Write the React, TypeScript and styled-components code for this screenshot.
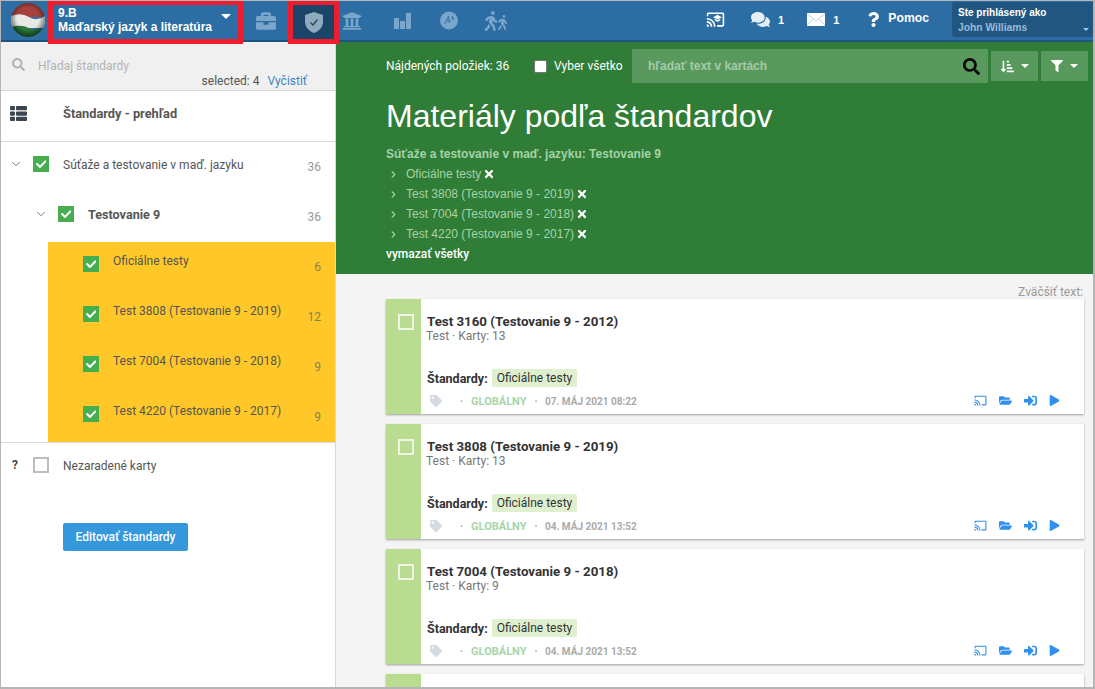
import React from "react";
import styled, { createGlobalStyle } from "styled-components";
import {
  FaBriefcase,
  FaUniversity,
  FaWalking,
  FaCheck,
  FaTimes,
  FaSearch,
  FaFilter,
  FaTag,
  FaFolderOpen,
  FaSignInAlt,
  FaPlay,
  FaComments,
  FaQuestion,
  FaThList,
  FaSortAmountDownAlt,
} from "react-icons/fa";
import { MdCastForEducation, MdCast } from "react-icons/md";
import { ChevronDown, ChevronRight } from "lucide-react";

const Global = createGlobalStyle`
  html, body {
    margin: 0;
    padding: 0;
    background: #f4f4f4;
    font-family: "Liberation Sans", Arial, sans-serif;
  }
  * { box-sizing: border-box; }
`;

const Page = styled.div`
  width: 1095px;
  height: 689px;
  overflow: hidden;
  border: 1px solid #b5b5b5;
  border-right-width: 2px;
  border-bottom-width: 2px;
  display: flex;
  flex-direction: column;
`;

const TopBar = styled.header`
  height: 41px;
  flex: none;
  display: flex;
  align-items: stretch;
  background: #2c6ea4;
  border-bottom: 2px solid #1d5480;
  position: relative;
`;
const FlagWrap = styled.div`
  width: 47px;
  padding: 2px 0 0 10px;
  flex: none;
`;
const ClassPicker = styled.div`
  width: 195px;
  flex: none;
  margin-top: -1px;
  height: 44px;
  z-index: 2;
  border: 5px solid #ed1c2e;
  background: #2c6ea4;
  color: #fff;
  font-weight: 700;
  font-size: 12px;
  line-height: 14px;
  padding: 1px 0 0 5px;
  position: relative;
`;
const Caret = styled.span<{ $size?: number; $color?: string }>`
  display: inline-block;
  width: 0;
  height: 0;
  border-left: ${(p) => p.$size || 4}px solid transparent;
  border-right: ${(p) => p.$size || 4}px solid transparent;
  border-top: ${(p) => p.$size || 4}px solid ${(p) => p.$color || "#fff"};
`;
const PickerCaret = styled.span`
  position: absolute;
  right: 7px;
  top: 9px;
  display: flex;
`;
const NavIcons = styled.nav`
  display: flex;
  align-items: stretch;
`;
const NavIcon = styled.div<{ $w: number; $active?: boolean }>`
  width: ${(p) => p.$w}px;
  flex: none;
  display: flex;
  align-items: center;
  justify-content: center;
  color: #7aa6cb;
  font-size: 20px;
  ${(p) =>
    p.$active &&
    `
    height: 44px;
    margin-top: -1px;
    z-index: 2;
    background: #1b4566;
    border: 5px solid #ed1c2e;
    color: #8fa9bd;
  `}
  svg + svg {
    margin-left: -6px;
    margin-top: 3px;
  }
`;
const TopRight = styled.div`
  margin-left: auto;
  display: flex;
  align-items: center;
  color: #fff;
  padding-bottom: 2px;
`;
const TopItem = styled.div<{ $ml: number }>`
  margin-left: ${(p) => p.$ml}px;
  display: flex;
  align-items: center;
  gap: 8px;
  font-size: 11px;
  font-weight: 700;
`;
const HelpLabel = styled.span`
  font-size: 12.2px;
  margin-left: -1px;
  margin-top: -3px;
`;
const UserBox = styled.div`
  width: 141px;
  height: 35px;
  margin: 1px 0 0 23px;
  align-self: flex-start;
  background: #215681;
  border-radius: 3px 0 0 3px;
  padding: 4px 0 0 6px;
  font-size: 10px;
  line-height: 14px;
  font-weight: 700;
  position: relative;
`;
const UserName = styled.div`
  color: #98bad9;
  font-size: 10.3px;
  margin-top: 1px;
`;
const UserCaret = styled.span`
  position: absolute;
  right: 4px;
  bottom: 6px;
  display: flex;
`;

const Body = styled.div`
  flex: 1;
  display: flex;
  min-height: 0;
`;
const Side = styled.aside`
  width: 335px;
  flex: none;
  background: #fff;
  border-right: 1px solid #d8d8d8;
  color: #555;
  font-family: Roboto, "Liberation Sans", sans-serif;
`;
const SideSearch = styled.div`
  height: 49px;
  background: #f0f0f0;
  border-bottom: 1px solid #d8d8d8;
  position: relative;
  padding: 16px 0 0 11px;
  display: flex;
  gap: 13px;
  color: #b3b3b3;
  font-size: 12px;
`;
const Placeholder = styled.span`
  line-height: 17px;
`;
const Selected = styled.div`
  position: absolute;
  right: 28px;
  top: 32px;
  font-size: 12px;
  color: #555;
  display: flex;
  gap: 8px;
`;
const ClearLink = styled.span`
  color: #3f85bd;
`;
const Overview = styled.div`
  height: 51px;
  display: flex;
  align-items: center;
  padding: 0 0 5px 9px;
  font-size: 12.8px;
  font-weight: 700;
  color: #555;
  border-bottom: 1px solid #d8d8d8;
`;
const OverviewIcon = styled.span`
  width: 53px;
  display: flex;
  color: #3c4650;
  font-size: 17px;
`;
const Row = styled.div<{ $indent: number; $hl?: boolean; $bold?: boolean }>`
  height: 50px;
  display: flex;
  align-items: flex-start;
  padding-top: ${(p) => (p.$hl ? 11 : 14)}px;
  margin-left: ${(p) => (p.$hl ? 47 : 0)}px;
  padding-left: ${(p) => (p.$hl ? p.$indent - 47 : p.$indent)}px;
  background: ${(p) => (p.$hl ? "#ffc727" : "transparent")};
  font-size: ${(p) => (p.$bold ? 12.6 : 12)}px;
  font-weight: ${(p) => (p.$bold ? 700 : 400)};
`;
const Toggle = styled.span`
  width: 22px;
  height: 16px;
  flex: none;
  display: flex;
  align-items: center;
  margin-left: -2px;
  margin-right: 2px;
  color: #666;
`;
const Box = styled.span<{ $checked?: boolean; $mt?: number }>`
  width: 16px;
  height: 16px;
  flex: none;
  margin-top: ${(p) => p.$mt || 0}px;
  display: flex;
  align-items: center;
  justify-content: center;
  color: #fff;
  font-size: 10.5px;
  background: ${(p) => (p.$checked ? "#46ae4f" : "#fff")};
  border: ${(p) => (p.$checked ? "none" : "2px solid #bdbdbd")};
`;
const RowLabel = styled.span<{ $mt?: number }>`
  margin: ${(p) => p.$mt ?? 2}px 0 0 14px;
  flex: 1;
  line-height: 15px;
`;
const Count = styled.span<{ $hl?: boolean }>`
  width: 40px;
  padding-right: 14px;
  text-align: right;
  color: ${(p) => (p.$hl ? "#8a7f5c" : "#999")};
  font-size: 12px;
  font-weight: 400;
  margin-top: ${(p) => (p.$hl ? 7 : 4)}px;
  line-height: 15px;
`;
const Unsorted = styled.div`
  border-top: 1px solid #d8d8d8;
  height: 50px;
  padding: 14px 0 0 11px;
  display: flex;
  font-size: 12px;
`;
const UnsortedMark = styled.span`
  width: 21px;
  flex: none;
  font-weight: 700;
  color: #444;
  line-height: 16px;
`;
const EditButton = styled.button`
  display: block;
  margin: 31px 0 0 62px;
  width: 125px;
  height: 28px;
  border: 0;
  border-radius: 2px;
  background: #3498db;
  color: #fff;
  font-family: Roboto, "Liberation Sans", sans-serif;
  font-size: 12px;
  font-weight: 500;
`;

const Main = styled.main`
  flex: 1;
  min-width: 0;
`;
const Hero = styled.section`
  height: 232px;
  background: #2f7d36;
  padding: 0 0 0 50px;
  color: #fff;
`;
const HeroTools = styled.div`
  height: 48px;
  display: flex;
  align-items: center;
  font-size: 12px;
`;
const Found = styled.span`
  font-family: Roboto, "Liberation Sans", sans-serif;
  width: 148px;
  flex: none;
`;
const SelectAll = styled.label`
  display: flex;
  align-items: center;
  gap: 7px;
  width: 98px;
  flex: none;
  font-family: Roboto, "Liberation Sans", sans-serif;
`;
const FakeCheck = styled.span`
  width: 13px;
  height: 13px;
  background: #fff;
  border: 1px solid #777;
  border-radius: 2px;
`;
const SearchBox = styled.div`
  width: 356px;
  flex: none;
  height: 34px;
  background: #59995e;
  display: flex;
  align-items: center;
  justify-content: space-between;
  padding: 0 8px 0 16px;
  color: #a5cba8;
  font-size: 12px;
  font-weight: 700;
`;
const SearchGlyph = styled.span`
  color: #0a0a0a;
  font-size: 17px;
  display: flex;
`;
const ToolButton = styled.div`
  width: 47px;
  flex: none;
  height: 30px;
  margin-left: 3px;
  background: #59995e;
  display: flex;
  align-items: center;
  justify-content: center;
  gap: 7px;
  font-size: 13px;
`;
const Title = styled.h1`
  margin: 7px 0 0;
  font-size: 32px;
  line-height: 38px;
  font-weight: 400;
`;
const Crumb = styled.div`
  margin-top: 12px;
  font-size: 12px;
  line-height: 15px;
  font-weight: 700;
  color: #a5d2a8;
`;
const Filters = styled.div`
  margin-top: 2px;
`;
const Filter = styled.div`
  height: 20px;
  display: flex;
  align-items: center;
  font-size: 12px;
  color: #a5d2a8;
`;
const FilterChevron = styled.span`
  width: 20px;
  padding-left: 2px;
  display: flex;
`;
const FilterX = styled.span`
  color: #fff;
  font-size: 12px;
  display: flex;
  margin-left: 2px;
`;
const ClearAll = styled.div`
  font-family: Roboto, "Liberation Sans", sans-serif;
  font-size: 12px;
  font-weight: 500;
  color: #fff;
  line-height: 20px;
`;

const List = styled.section`
  padding: 11px 9px 0 50px;
`;
const Zoom = styled.div`
  text-align: right;
  font-family: Roboto, "Liberation Sans", sans-serif;
  font-size: 12px;
  line-height: 15px;
  color: #999;
  margin: 0 1px -1px 0;
`;
const Card = styled.article`
  display: flex;
  height: 115px;
  margin-bottom: 10px;
  background: #fff;
  box-shadow: 0 1px 2px rgba(0, 0, 0, 0.35);
  font-family: Roboto, "Liberation Sans", sans-serif;
`;
const Stripe = styled.div`
  width: 35px;
  flex: none;
  background: #b9dc91;
  padding: 15px 0 0 12px;
`;
const StripeBox = styled.span`
  display: block;
  width: 16px;
  height: 16px;
  border: 2px solid #f0f6e6;
`;
const CardBody = styled.div`
  flex: 1;
  padding: 15px 5px 0 6px;
  min-width: 0;
`;
const CardTitle = styled.div`
  font-size: 13.3px;
  line-height: 16px;
  font-weight: 700;
  color: #333;
`;
const CardMeta = styled.div`
  font-size: 12px;
  line-height: 14px;
  color: #777;
  margin: -1px 0 0 -1px;
`;
const Standards = styled.div`
  margin-top: 26px;
  display: flex;
  align-items: center;
  gap: 4px;
  font-size: 12.5px;
  font-weight: 700;
  color: #333;
`;
const Chip = styled.span`
  background: #dff0cf;
  padding: 0 5px;
  height: 18px;
  font-size: 12px;
  line-height: 18px;
  border-radius: 2px;
  font-weight: 400;
`;
const CardFoot = styled.div`
  margin-top: 5px;
  display: flex;
  align-items: center;
  height: 18px;
  font-size: 10px;
  font-weight: 700;
  color: #aaa;
`;
const TagIcon = styled.span`
  color: #d4dae0;
  font-size: 12px;
  display: flex;
  margin: 0 0 0 3px;
  width: 30px;
`;
const Scope = styled.span`
  color: #a6d5a8;
  font-size: 11px;
  margin: 0 8px;
`;
const Actions = styled.div`
  margin: -1px 19px 0 auto;
  display: flex;
  align-items: center;
  gap: 12px;
  font-size: 13px;
  color: #2f90ee;
`;

const Flag = () => (
  <svg width="34" height="34" viewBox="0 0 34 34">
    <defs>
      <clipPath id="fc">
        <circle cx="17" cy="17" r="17" />
      </clipPath>
      <radialGradient id="fs" cx="50%" cy="45%" r="55%">
        <stop offset="60%" stopColor="#000" stopOpacity="0" />
        <stop offset="100%" stopColor="#000" stopOpacity="0.55" />
      </radialGradient>
    </defs>
    <g clipPath="url(#fc)">
      <rect width="34" height="14" fill="#a5413d" />
      <path d="M0 13 Q10 9 18 14 T34 13 V25 H0Z" fill="#e8e8e4" />
      <path d="M0 24 Q10 21 18 25 T34 24 V34 H0Z" fill="#2d7a3c" />
      <circle cx="17" cy="17" r="17" fill="url(#fs)" />
    </g>
  </svg>
);

const Shield = () => (
  <svg width="18" height="21" viewBox="0 0 18 21">
    <path d="M9 0 L18 3 V10 C18 15 14 19 9 21 C4 19 0 15 0 10 V3Z" fill="currentColor" />
    <path d="M5.5 10.5 L8 13 L12.5 7.5" stroke="#1b4566" strokeWidth="1.2" fill="none" />
  </svg>
);

const Bars = () => (
  <svg width="17" height="17" viewBox="0 0 17 17" fill="currentColor">
    <rect x="0" y="6" width="5" height="11" />
    <rect x="6" y="9" width="5" height="8" />
    <rect x="12" y="1" width="5" height="16" />
  </svg>
);

const Badge = () => (
  <svg width="19" height="19" viewBox="0 0 19 19">
    <circle cx="9.5" cy="9.5" r="9.5" fill="currentColor" />
    <path d="M5 13 L9 5 L10 12 M7 10 H11 M12 6 L15 8 M13.5 5 V9" stroke="#2c6ea4" strokeWidth="1" fill="none" />
  </svg>
);

const Mail = () => (
  <svg width="18" height="13" viewBox="0 0 18 13">
    <rect width="18" height="13" fill="#fff" />
    <path d="M0 1 L9 7.5 L18 1 M0 12 L6 6 M18 12 L12 6" stroke="#a9c6de" strokeWidth="0.8" fill="none" />
  </svg>
);

const cards = [
  { title: "Test 3160 (Testovanie 9 - 2012)", count: 13, date: "07. MÁJ 2021 08:22" },
  { title: "Test 3808 (Testovanie 9 - 2019)", count: 13, date: "04. MÁJ 2021 13:52" },
  { title: "Test 7004 (Testovanie 9 - 2018)", count: 9, date: "04. MÁJ 2021 13:52" },
  { title: "", count: 0, date: "" },
];

const subRows = [
  { label: "Oficiálne testy", count: 6 },
  { label: "Test 3808 (Testovanie 9 - 2019)", count: 12 },
  { label: "Test 7004 (Testovanie 9 - 2018)", count: 9 },
  { label: "Test 4220 (Testovanie 9 - 2017)", count: 9 },
];

const filters = [
  "Oficiálne testy",
  "Test 3808 (Testovanie 9 - 2019)",
  "Test 7004 (Testovanie 9 - 2018)",
  "Test 4220 (Testovanie 9 - 2017)",
];

const App = () => {
  return (
    <Page>
      <Global />
      <TopBar>
        <FlagWrap>
          <Flag />
        </FlagWrap>
        <ClassPicker>
          9.B
          <br />
          Maďarský jazyk a literatúra
          <PickerCaret>
            <Caret $size={5} />
          </PickerCaret>
        </ClassPicker>
        <NavIcons>
          <NavIcon $w={45}>
            <FaBriefcase />
          </NavIcon>
          <NavIcon $w={51} $active>
            <Shield />
          </NavIcon>
          <NavIcon $w={26}>
            <FaUniversity />
          </NavIcon>
          <NavIcon $w={75}>
            <Bars />
          </NavIcon>
          <NavIcon $w={18}>
            <Badge />
          </NavIcon>
          <NavIcon $w={75}>
            <FaWalking />
            <FaWalking size={15} />
          </NavIcon>
        </NavIcons>
        <TopRight>
          <TopItem $ml={0}>
            <MdCastForEducation size={19} />
          </TopItem>
          <TopItem $ml={26}>
            <FaComments size={19} color="#e6eef5" />
            <span>1</span>
          </TopItem>
          <TopItem $ml={23}>
            <Mail />
            <span>1</span>
          </TopItem>
          <TopItem $ml={27}>
            <FaQuestion size={15} />
            <HelpLabel>Pomoc</HelpLabel>
          </TopItem>
          <UserBox>
            Ste prihlásený ako
            <UserName>John Williams</UserName>
            <UserCaret>
              <Caret $size={3} $color="#a5c3de" />
            </UserCaret>
          </UserBox>
        </TopRight>
      </TopBar>
      <Body>
        <Side>
          <SideSearch>
            <FaSearch size={13} />
            <Placeholder>Hľadaj štandardy</Placeholder>
            <Selected>
              selected: 4<ClearLink>Vyčistiť</ClearLink>
            </Selected>
          </SideSearch>
          <Overview>
            <OverviewIcon>
              <FaThList />
            </OverviewIcon>
            Štandardy - prehľad
          </Overview>
          <Row $indent={10}>
            <Toggle>
              <ChevronDown size={14} strokeWidth={1.5} />
            </Toggle>
            <Box $checked>
              <FaCheck />
            </Box>
            <RowLabel>Súťaže a testovanie v maď. jazyku</RowLabel>
            <Count>36</Count>
          </Row>
          <Row $indent={35} $bold>
            <Toggle>
              <ChevronDown size={14} strokeWidth={1.5} />
            </Toggle>
            <Box $checked>
              <FaCheck />
            </Box>
            <RowLabel $mt={1}>Testovanie 9</RowLabel>
            <Count>36</Count>
          </Row>
          {subRows.map((r) => (
            <Row key={r.label} $indent={82} $hl>
              <Box $checked $mt={3}>
                <FaCheck />
              </Box>
              <RowLabel $mt={1}>{r.label}</RowLabel>
              <Count $hl>{r.count}</Count>
            </Row>
          ))}
          <Unsorted>
            <UnsortedMark>?</UnsortedMark>
            <Box />
            <RowLabel>Nezaradené karty</RowLabel>
          </Unsorted>
          <EditButton>Editovať štandardy</EditButton>
        </Side>
        <Main>
          <Hero>
            <HeroTools>
              <Found>Nájdených položiek: 36</Found>
              <SelectAll>
                <FakeCheck />
                Vyber všetko
              </SelectAll>
              <SearchBox>
                hľadať text v kartách
                <SearchGlyph>
                  <FaSearch />
                </SearchGlyph>
              </SearchBox>
              <ToolButton>
                <FaSortAmountDownAlt />
                <Caret />
              </ToolButton>
              <ToolButton>
                <FaFilter size={12} />
                <Caret />
              </ToolButton>
            </HeroTools>
            <Title>Materiály podľa štandardov</Title>
            <Crumb>Súťaže a testovanie v maď. jazyku: Testovanie 9</Crumb>
            <Filters>
              {filters.map((f) => (
                <Filter key={f}>
                  <FilterChevron>
                    <ChevronRight size={11} strokeWidth={2.5} />
                  </FilterChevron>
                  {f}
                  <FilterX>
                    <FaTimes />
                  </FilterX>
                </Filter>
              ))}
            </Filters>
            <ClearAll>vymazať všetky</ClearAll>
          </Hero>
          <List>
            <Zoom>Zväčšiť text:</Zoom>
            {cards.map((c, i) => (
              <Card key={i}>
                <Stripe>{c.title && <StripeBox />}</Stripe>
                {c.title && (
                  <CardBody>
                    <CardTitle>{c.title}</CardTitle>
                    <CardMeta>Test · Karty: {c.count}</CardMeta>
                    <Standards>
                      Štandardy: <Chip>Oficiálne testy</Chip>
                    </Standards>
                    <CardFoot>
                      <TagIcon>
                        <FaTag />
                      </TagIcon>
                      ·<Scope>GLOBÁLNY</Scope>·&nbsp;&nbsp;&nbsp;{c.date}
                      <Actions>
                        <MdCast />
                        <FaFolderOpen />
                        <FaSignInAlt />
                        <FaPlay size={11} />
                      </Actions>
                    </CardFoot>
                  </CardBody>
                )}
              </Card>
            ))}
          </List>
        </Main>
      </Body>
    </Page>
  );
};

export default App;
